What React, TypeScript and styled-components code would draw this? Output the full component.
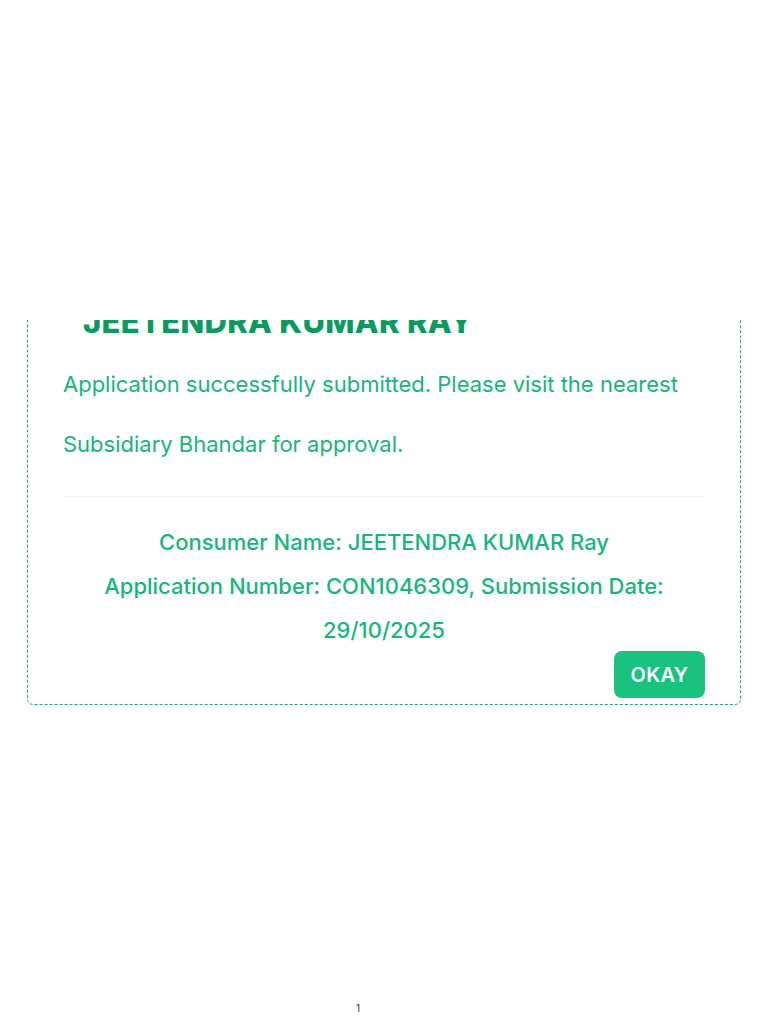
import React from 'react';
import styled, { createGlobalStyle } from 'styled-components';

const GlobalStyle = createGlobalStyle`
  html, body {
    margin: 0;
    padding: 0;
    background: #ffffff;
    font-family: Inter, "Noto Sans", sans-serif;
  }
`;

// Styled components
const Page = styled.div`
  width: 768px;
  height: 1024px;
  display: flex;
  flex-direction: column;
  align-items: center;
  background: #ffffff;
`;

const Viewport = styled.div`
  width: 100%;
  margin-top: 320px;
  overflow: hidden;
  padding: 0 27px;
  box-sizing: border-box;
`;

const Card = styled.div`
  margin-top: -40px;
  border: 1px dashed #2a9c88;
  border-radius: 6px;
  padding: 21px 35px 6px;
  display: flex;
  flex-direction: column;
`;

const Heading = styled.h2`
  margin: 0 0 12px 20px;
  font-size: 31px;
  line-height: 40px;
  font-weight: 800;
  color: #0d9a60;
  letter-spacing: 0.3px;
`;

const Message = styled.p`
  margin: 0;
  font-size: 22px;
  line-height: 60px;
  color: #17b57b;
`;

const Divider = styled.hr`
  margin: 22px 0 0;
  border: none;
  border-top: 1px solid #f1f3f2;
`;

const Details = styled.div`
  margin-top: 23px;
  text-align: center;
  font-size: 22px;
  line-height: 44px;
  font-weight: 500;
  color: #18b67c;
`;

const Actions = styled.div`
  display: flex;
  justify-content: flex-end;
  margin-top: -1px;
`;

const OkButton = styled.button`
  width: 91px;
  height: 47px;
  border: none;
  border-radius: 8px;
  background: #1ac280;
  color: #ffffff;
  font-family: Inter, sans-serif;
  font-size: 20px;
  font-weight: 600;
  letter-spacing: 0.3px;
`;

const Footer = styled.div`
  margin-top: auto;
  margin-bottom: 10px;
  padding-right: 52px;
  font-size: 10px;
  color: #333;
`;

const App = () => {
  return (
    <>
      <GlobalStyle />
      <Page>
        <Viewport>
          <Card>
            <Heading>JEETENDRA KUMAR RAY</Heading>
            <Message>
              Application successfully submitted. Please visit the nearest Subsidiary Bhandar for approval.
            </Message>
            <Divider />
            <Details>
              <div>Consumer Name: JEETENDRA KUMAR Ray</div>
              <div>Application Number: CON1046309, Submission Date: 29/10/2025</div>
            </Details>
            <Actions>
              <OkButton>OKAY</OkButton>
            </Actions>
          </Card>
        </Viewport>
        <Footer>1</Footer>
      </Page>
    </>
  );
};

export default App;
